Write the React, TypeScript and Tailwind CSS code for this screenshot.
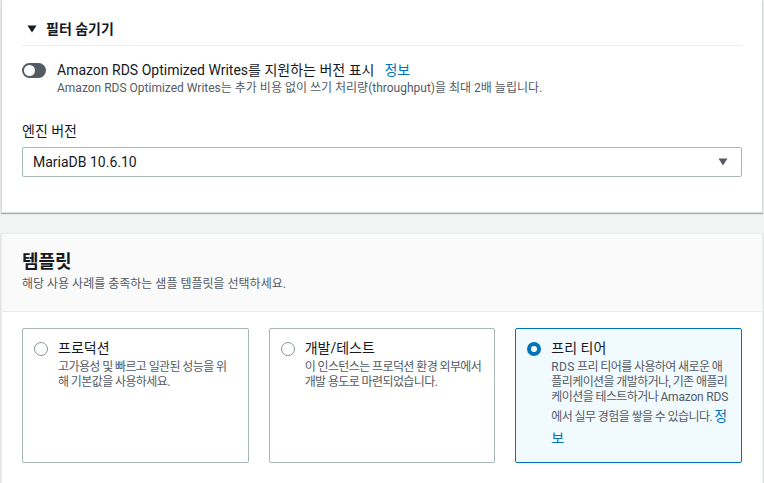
import React from 'react';

const TEMPLATES: { id: string; title: string; desc: React.ReactNode }[] = [
  { id: 'prod', title: '프로덕션', desc: '고가용성 및 빠르고 일관된 성능을 위해 기본값을 사용하세요.' },
  { id: 'dev', title: '개발/테스트', desc: '이 인스턴스는 프로덕션 환경 외부에서 개발 용도로 마련되었습니다.' },
  {
    id: 'free', title: '프리 티어',
    desc: <><span className="tracking-[0.3px]">RDS</span> 프리 티어를 사용하여 새로운 애플리케이션을 개발하거나, 기존 애플리케이션을 테스트하거나 <span className="tracking-[-0.2px]">Amazon RDS</span>에서 실무 경험을 쌓을 수 있습니다.</>,
  },
];

function Caret({ className = '' }: { className?: string }) {
  return (
    <svg width="10" height="8" viewBox="0 0 10 8" className={className}>
      <path d="M0.5 0.5h9L5 7.5z" fill="currentColor" />
    </svg>
  );
}

export default function App() {
  const selected = 'free';

  return (
    <div className="min-h-[483px] bg-[#f2f3f3] px-px text-[#16191f] font-['Roboto','Noto_Sans_CJK_KR',sans-serif]">
      {/* 필터 / 엔진 버전 */}
      <div className="bg-white border-x border-b border-[#d5dbdb] shadow-[0_1px_1px_0_rgba(0,28,36,0.3)] px-5 pt-[19px] pb-[35px]">
        <div className="border-b border-[#eaeded] pb-[6px]">
          <button className="flex items-center gap-[9px] pl-[5px] text-sm font-bold leading-5">
            <Caret className="text-[#16191f]" />
            필터 숨기기
          </button>
        </div>

        <div className="mt-[14px] flex gap-[11px]">
          <div className="mt-[3px] flex h-[15px] w-6 shrink-0 items-center rounded-full bg-[#545b64] px-[2px]">
            <div className="h-[11px] w-[11px] rounded-full bg-white" />
          </div>
          <div>
            <div className="flex items-center gap-[10px] text-sm leading-5">
              <span>Amazon RDS Optimized Writes를 지원하는 버전 표시</span>
              <a className="text-[#0073bb]">정보</a>
            </div>
            <p className="text-xs leading-4 text-[#545b64]">
              Amazon RDS Optimized Writes는 추가 비용 없이 쓰기 처리량(throughput)을 최대 2배 늘립니다.
            </p>
          </div>
        </div>

        <label className="mt-[25px] block text-sm leading-5">엔진 버전</label>
        <div className="mt-[6px] flex h-[30px] items-center justify-between rounded-[2px] border border-[#aab7b8] pl-[10px] pr-[13px] text-sm">
          <span>MariaDB 10.6.10</span>
          <Caret className="text-[#545b64]" />
        </div>
      </div>

      {/* 템플릿 */}
      <div className="mt-5 bg-white border-x border-t border-[#eaeded] shadow-[0_1px_1px_0_rgba(0,28,36,0.3)]">
        <div className="bg-[#fafafa] border-b border-[#eaeded] px-5 pt-[16px] pb-[19px]">
          <h2 className="text-lg font-bold leading-6">템플릿</h2>
          <p className="mt-[2px] text-xs leading-4 text-[#545b64]">해당 사용 사례를 충족하는 샘플 템플릿을 선택하세요.</p>
        </div>
        <div className="grid grid-cols-3 gap-5 px-5 pt-4 pb-5">
          {TEMPLATES.map(t => {
            const on = t.id === selected;
            return (
              <div key={t.id}
                className={`h-[135px] rounded-[2px] border pl-[11px] pr-[11px] pt-[9px] flex gap-[10px] ${on ? 'border-[#0073bb] bg-[#f1faff]' : 'border-[#aab7b8] bg-white'}`}>
                <div className="pt-[4px] shrink-0">
                  {on ? (
                    <div className="h-[14px] w-[14px] rounded-full border-[4px] border-[#0073bb] bg-white" />
                  ) : (
                    <div className="h-[14px] w-[14px] rounded-full border border-[#879596] bg-white" />
                  )}
                </div>
                <div className="min-w-0">
                  <div className="text-sm leading-5">{t.title}</div>
                  <p className="mt-[2px] text-xs leading-[15px] tracking-[-0.6px] text-[#545b64]">
                    {t.desc}
                    {on && <> <a className="text-sm leading-[22px] tracking-normal text-[#0073bb]">정보</a></>}
                  </p>
                </div>
              </div>
            );
          })}
        </div>
      </div>
    </div>
  );
}
